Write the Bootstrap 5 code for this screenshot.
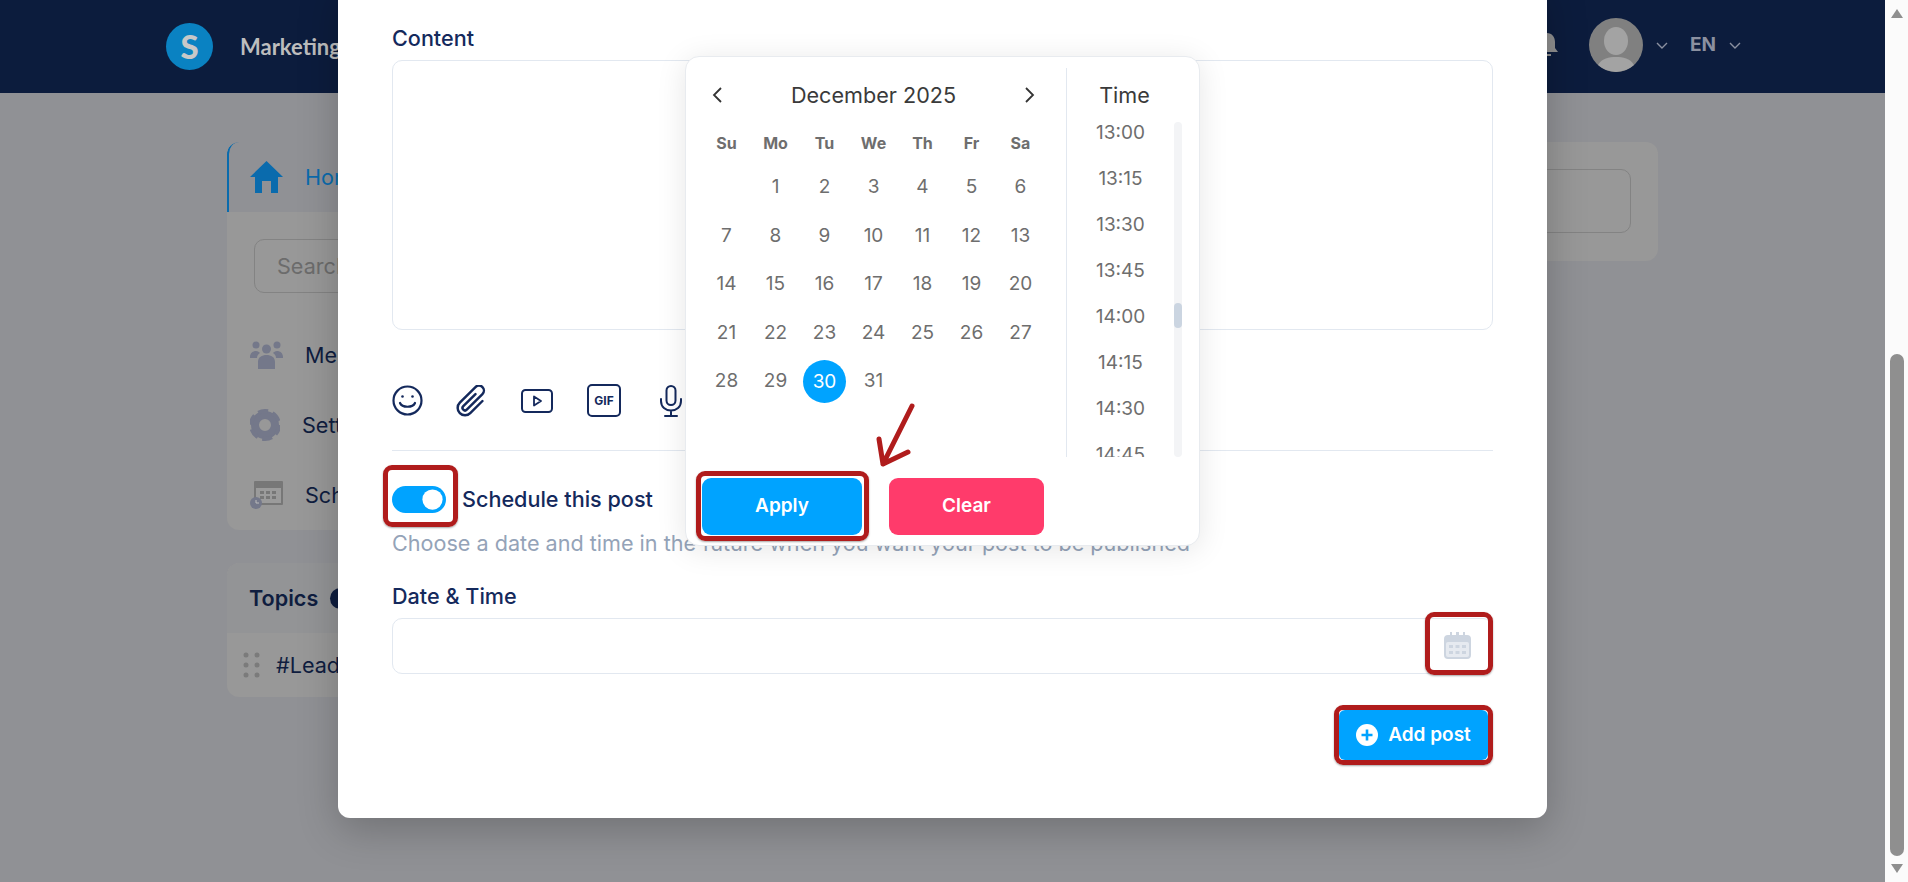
<!doctype html>
<html lang="en">

<head>
    <meta charset="utf-8">
    <meta name="viewport" content="width=device-width, initial-scale=1">
    <link href="https://cdn.jsdelivr.net/npm/bootstrap@5.3.3/dist/css/bootstrap.min.css" rel="stylesheet">
    <title>Schedule post</title>
    <style>
        html, body { height: 100%; overflow: hidden; }
        body { font-family: Inter, "Liberation Sans", sans-serif; color: #14295c; background: #fbfbfb; }

        /* page behind the dialog, colours are already dimmed */
        .page-area { width: 1885px; height: 882px; background: #909195; overflow: hidden; }
        .top-bar { height: 93px; background: #0c1c3d; padding: 0 144px 0 166px; }
        .brand-dot { width: 47px; height: 47px; border-radius: 50%; background: #0a82c2; color: #c8c8c8; font: 900 33px/47px Lato, sans-serif; text-align: center; }
        .brand-name { font: 700 22px Lato, sans-serif; color: #bdbdbd; margin-left: 27px; }
        .top-right { gap: 13px; margin-bottom: 3px; }
        .avatar-dot { width: 54px; height: 54px; margin-left: 15px; }
        .lang-name { font-size: 19px; font-weight: 700; color: #8b90a0; margin-left: 9px; }
        .page-main { padding: 49px 227px 0; }
        .side-col { width: 330px; }
        .dim-card { background: #989898; border: 0; border-radius: 12px; }
        .side-row { height: 70px; padding-left: 23px; font-size: 21.6px; color: #0f1d3f; gap: 22px; }
        .side-row svg { flex: none; }
        .side-active { background: #909195; border-left: 2px solid #0a6bad; color: #0a6bad; border-radius: 12px 0 0 0; padding-left: 21px; }
        .side-search { margin: 27px 0 27px 27px; width: 260px; height: 54px; padding-left: 22px; background: transparent; border-color: #838383; border-radius: 10px; font-size: 21.6px; }
        .side-search::placeholder { color: #6c6c6c; }
        .topics-card { margin-top: 33px; height: 134px; }
        .topics-head { height: 70px; padding-left: 22px; gap: 12px; background: #939496; font-size: 21.6px; font-weight: 600; color: #0f1d3f; border-radius: 12px 12px 0 0; }
        .topics-add { width: 21px; height: 21px; border-radius: 50%; background: #0f1d3f; }
        .topics-row { height: 64px; padding-left: 16px; gap: 16px; font-size: 21.6px; color: #0f1d3f; }
        .wide-card { width: 500px; height: 119px; padding: 27px 27px; }
        .wide-input { height: 64px; border: 1px solid #838383; border-radius: 10px; }

        /* dialog */
        .post-dialog { position: absolute; left: 338px; top: -20px; width: 1209px; height: 838px; padding: 46px 54px 0; border: 0; border-radius: 12px; background: #fff; box-shadow: 0 12px 40px rgba(0, 0, 0, .22); }
        .field-label { font-size: 21.6px; font-weight: 500; line-height: 24px; margin-bottom: 10px; color: #14295c; }
        .field-box { border: 1px solid #e2e8f0; border-radius: 10px; box-shadow: none; }
        .content-box { height: 270px; resize: none; }
        .tool-row { margin-top: 54px; height: 33px; gap: 33px; color: #14295c; }
        .gif-box { width: 34px; height: 33px; margin-left: 1px; border: 2px solid #14295c; border-radius: 5px; font-size: 12px; font-weight: 700; }
        .mic-icon { margin-left: 6px; }
        .dialog-line { margin: 33px 0 35px; border-top: 1px solid #e2e8f0; opacity: 1; }
        .switch-wrap { width: 54px; height: 27px; }
        .switch-input.form-check-input { width: 54px; height: 27px; margin: 0; float: none; border: 0; background-color: #00a3ff; }
        .switch-row { min-height: 27px; }
        .switch-text { font-size: 21.6px; line-height: 27px; font-weight: 500; margin-left: 16px; }
        .help-line { margin-top: 18px; font-size: 21.6px; line-height: 24px; color: #94a3b8; }
        .date-label { margin-top: 29px; }
        .date-box { height: 56px; }
        .cal-icon { position: absolute; right: 22px; top: 14px; }
        .add-btn { margin: 36px 5px 0 auto; width: 149px; height: 50px; border: 0; border-radius: 6px; background: #00a3ff; color: #fff; font-size: 19px; font-weight: 600; gap: 10px; }
        .add-btn:hover { background: #00a3ff; color: #fff; }

        /* red marks of the screenshot's author */
        .note-frame { position: absolute; border: 5px solid #b01c1c; border-radius: 9px; pointer-events: none; box-shadow: 0 1px 2px rgba(0, 0, 0, .35); }
        .frame-switch { left: -9px; right: -12px; top: -21px; bottom: -14px; }
        .frame-apply { left: -6px; right: -7px; top: -7px; bottom: -6px; }
        .frame-cal { right: 0; width: 68px; top: -6px; bottom: -1px; }
        .frame-add { inset: -5px; }
        .note-arrow { position: absolute; left: 190px; top: 346px; }

        /* date picker */
        .date-pop { position: absolute; left: 347px; top: 76px; width: 515px; height: 490px; padding-top: 11px; background: #fff; border: 1px solid #e8ebef; border-radius: 14px; box-shadow: 0 4px 30px rgba(0, 0, 0, .1); }
        .pop-top { height: 389px; }
        .month-col { width: 381px; padding-left: 16px; border-right: 1px solid #e2e8f0; }
        .month-head { height: 54px; width: 343px; padding: 0 10px; font-size: 21.6px; color: #3a3a3a; }
        .day-grid { display: grid; grid-template-columns: repeat(7, 49px); grid-auto-rows: 48.5px; text-align: center; font-size: 19px; color: #6e6e6e; }
        .day-grid > div { display: flex; align-items: center; justify-content: center; }
        .week-grid { grid-auto-rows: 41px; font-size: 16px; font-weight: 700; }
        .day-on { width: 43px; height: 43px; line-height: 43px; border-radius: 50%; background: #00a3ff; color: #fff; }
        .time-col { width: 115px; }
        .time-head { height: 54px; font-size: 21.6px; color: #3a3a3a; }
        .time-body { height: 335px; }
        .time-list { width: 107px; overflow: hidden; font-size: 19px; color: #6e6e6e; text-align: center; }
        .time-item { height: 46px; line-height: 46px; }
        .time-item:first-child { height: 34px; line-height: 22px; }
        .time-track { width: 8px; background: #f3f4f6; border-radius: 4px; }
        .time-thumb { width: 8px; height: 25px; margin-top: 181px; background: #cbd5e1; border-radius: 4px; }
        .pop-foot { padding: 21px 0 0 16px; gap: 27px; }
        .apply-btn, .clear-btn { height: 57px; border: 0; border-radius: 9px; color: #fff; font-size: 19px; font-weight: 600; }
        .apply-btn, .apply-btn:hover { width: 160px; background: #00a3ff; color: #fff; }
        .clear-btn, .clear-btn:hover { width: 155px; background: #ff3b6b; color: #fff; }

        /* browser scrollbar */
        .scroll-strip { width: 23px; height: 882px; padding: 9px 4px 9px 5px; }
        .arrow-up { border: 6px solid transparent; border-top: 0; border-bottom: 9px solid #8f8f8f; width: 0; margin: 0 auto; }
        .arrow-down { border: 6px solid transparent; border-bottom: 0; border-top: 9px solid #8f8f8f; width: 0; margin: 8px auto 0; }
        .scroll-thumb { height: 502px; margin-top: auto; background: #8f8f8f; border-radius: 7px; }
    </style>
</head>

<body class="d-flex">
    <div class="page-area position-relative">
        <header class="top-bar d-flex align-items-center">
            <div class="brand-dot">S</div>
            <span class="brand-name">Marketing</span>
            <div class="top-right d-flex align-items-center ms-auto">
                <svg width="28" height="24" viewBox="0 0 28 24" fill="#8f8f8f"><path d="M14 0c-5 0-8 4-8 9v6l-3 4h22l-3-4V9c0-5-3-9-8-9zM10 21h8v2h-8z"/></svg>
                <svg class="avatar-dot" viewBox="0 0 54 54"><circle cx="27" cy="27" r="27" fill="#808080"/><ellipse cx="27" cy="23" rx="12" ry="14" fill="#a3a3a3"/><path d="M9 47c4-7 11-8 18-8s14 1 18 8a27 27 0 0 1-36 0z" fill="#a3a3a3"/></svg>
                <svg width="12" height="7" viewBox="0 0 12 7" fill="none" stroke="#8b90a0" stroke-width="1.4"><path d="M1 1l5 5 5-5"/></svg>
                <span class="lang-name">EN</span>
                <svg width="12" height="7" viewBox="0 0 12 7" fill="none" stroke="#8b90a0" stroke-width="1.4"><path d="M1 1l5 5 5-5"/></svg>
            </div>
        </header>

        <main class="page-main d-flex align-items-start">
            <div class="side-col">
                <div class="card dim-card overflow-hidden">
                    <div class="side-row side-active d-flex align-items-center">
                        <svg width="33" height="32" viewBox="0 0 33 32" fill="#0a6bad"><path d="M16.500 0L33 16h-5v16h-7V20h-9v12H5V16H0z"/></svg>
                        <span>Home</span>
                    </div>
                    <input class="form-control side-search" type="text" placeholder="Search">
                    <div class="side-row d-flex align-items-center">
                        <svg width="33" height="28" viewBox="0 0 33 28" fill="#74788a"><circle cx="6" cy="4" r="3.500"/><circle cx="27" cy="4" r="3.500"/><circle cx="16.500" cy="8" r="4.500"/><path d="M0 16c0-4 3-6 6-6 2 0 3 1 4 2-2 1-3 3-3 5H0zM33 16c0-4-3-6-6-6-2 0-3 1-4 2 2 1 3 3 3 5h7zM8 28v-7c0-5 4-7 8.500-7S25 16 25 21v7z"/></svg>
                        <span>Members</span>
                    </div>
                    <div class="side-row d-flex align-items-center">
                        <svg width="30" height="36" viewBox="0 0 30 36"><circle cx="15" cy="18" r="10" fill="none" stroke="#74788a" stroke-width="8"/><circle cx="15" cy="18" r="14" fill="none" stroke="#74788a" stroke-width="4" stroke-dasharray="10 4.660"/></svg>
                        <span>Settings</span>
                    </div>
                    <div class="side-row d-flex align-items-center">
                        <svg width="33" height="28" viewBox="0 0 33 28"><rect x="4" y="0" width="29" height="24" rx="1" fill="#777"/><rect x="6" y="7" width="25" height="15" fill="#9b9b9b"/><g fill="#777"><rect x="10" y="10" width="4" height="3"/><rect x="16" y="10" width="4" height="3"/><rect x="22" y="10" width="4" height="3"/><rect x="10" y="15" width="4" height="3"/><rect x="16" y="15" width="4" height="3"/><rect x="22" y="15" width="4" height="3"/></g><circle cx="6" cy="22" r="6" fill="#74788a"/><path d="M6 19v3h3" fill="none" stroke="#bbb" stroke-width="1"/></svg>
                        <span>Schedule posts</span>
                    </div>
                </div>
                <div class="card dim-card topics-card overflow-hidden">
                    <div class="topics-head d-flex align-items-center">Topics<span class="topics-add"></span></div>
                    <div class="topics-row d-flex align-items-center">
                        <svg width="17" height="26" viewBox="0 0 17 26" fill="#7b7b7b"><circle cx="3" cy="3" r="2.500"/><circle cx="14" cy="3" r="2.500"/><circle cx="3" cy="13" r="2.500"/><circle cx="14" cy="13" r="2.500"/><circle cx="3" cy="23" r="2.500"/><circle cx="14" cy="23" r="2.500"/></svg>
                        <span>#LeadGeneration</span>
                    </div>
                </div>
            </div>
            <div class="card dim-card wide-card ms-auto">
                <div class="wide-input"></div>
            </div>
        </main>

        <div class="modal-content post-dialog">
            <div class="field-label">Content</div>
            <textarea class="form-control field-box content-box"></textarea>

            <div class="tool-row d-flex align-items-center">
                <svg width="31" height="31" viewBox="0 0 31 31" fill="none" stroke="currentColor" stroke-width="2.200" stroke-linecap="round"><circle cx="15.500" cy="15.500" r="14"/><circle cx="10.500" cy="11.500" r="1.300" fill="currentColor" stroke="none"/><circle cx="20.500" cy="11.500" r="1.300" fill="currentColor" stroke="none"/><path d="M8 18c2 5 13 5 15 0"/></svg>
                <svg width="32" height="32" viewBox="1.500 1.500 13 13" fill="currentColor"><path transform="rotate(45 8 8)" d="M4.500 3a2.500 2.500 0 0 1 5 0v9a1.500 1.500 0 0 1-3 0V5a.5.5 0 0 1 1 0v7a.5.5 0 0 0 1 0V3a1.500 1.500 0 1 0-3 0v9a2.500 2.500 0 0 0 5 0V5a.5.5 0 0 1 1 0v7a3.500 3.500 0 1 1-7 0V3z"/></svg>
                <svg width="32" height="24" viewBox="0 0 32 24" fill="none" stroke="currentColor" stroke-width="2"><rect x="1" y="1" width="30" height="22" rx="3.500"/><path d="M13 7.500l7 4.500-7 4.500z" stroke-width="1.800" stroke-linejoin="round"/></svg>
                <span class="gif-box d-flex align-items-center justify-content-center">GIF</span>
                <svg class="mic-icon" width="22" height="32" viewBox="0 0 22 32" fill="none" stroke="currentColor" stroke-width="2" stroke-linecap="round"><rect x="6.500" y="1" width="9" height="19" rx="4.500"/><path d="M1 14v2c0 6 4.500 9.500 10 9.500S21 22 21 16v-2M11 25.500V31M5 31h12"/></svg>
            </div>
            <hr class="dialog-line">

            <div class="switch-row d-flex align-items-center form-check form-switch p-0 m-0">
                <div class="switch-wrap position-relative">
                    <input class="form-check-input switch-input" type="checkbox" role="switch" checked>
                    <span class="note-frame frame-switch"></span>
                </div>
                <span class="switch-text">Schedule this post</span>
            </div>
            <div class="help-line">Choose a date and time in the future when you want your post to be published</div>

            <div class="field-label date-label">Date &amp; Time</div>
            <div class="position-relative">
                <input class="form-control field-box date-box" type="text">
                <svg class="cal-icon" width="27" height="27" viewBox="0 0 27 27"><path d="M6 0h2v3h4V0h3v3h4V0h2v3h2a4 4 0 0 1 4 4v16a4 4 0 0 1-4 4H4a4 4 0 0 1-4-4V7a4 4 0 0 1 4-4h2z" fill="#cdd5e0"/><rect x="2" y="10" width="23" height="15" rx="2" fill="#e6eaf0"/><g fill="#cdd5e0"><rect x="5" y="13" width="4" height="3"/><rect x="11.500" y="13" width="4" height="3"/><rect x="18" y="13" width="4" height="3"/><rect x="5" y="19" width="4" height="3"/><rect x="11.500" y="19" width="4" height="3"/><rect x="18" y="19" width="4" height="3"/></g></svg>
                <span class="note-frame frame-cal"></span>
            </div>

            <div class="d-flex">
                <button type="button" class="btn add-btn d-flex align-items-center justify-content-center position-relative">
                    <svg width="22" height="22" viewBox="0 0 22 22"><circle cx="11" cy="11" r="11" fill="#fff"/><path d="M11 5.500v11M5.500 11h11" stroke="#00a3ff" stroke-width="2.600"/></svg>
                    Add post
                    <span class="note-frame frame-add"></span>
                </button>
            </div>

            <div id="date-pop" class="date-pop">
                <div class="pop-top d-flex">
                    <div class="month-col">
                        <div class="month-head d-flex align-items-center justify-content-between">
                            <svg width="12" height="16" viewBox="0 0 12 16" fill="none" stroke="#333" stroke-width="1.800"><path d="M9 1L2 8l7 7"/></svg>
                            <span>December 2025</span>
                            <svg width="12" height="16" viewBox="0 0 12 16" fill="none" stroke="#333" stroke-width="1.800"><path d="M3 1l7 7-7 7"/></svg>
                        </div>
                        <div id="week-grid" class="day-grid week-grid"></div>
                        <div id="day-grid" class="day-grid"></div>
                    </div>
                    <div class="time-col">
                        <div class="time-head d-flex align-items-center justify-content-center">Time</div>
                        <div class="time-body d-flex">
                            <div id="time-list" class="time-list"></div>
                            <div class="time-track"><div class="time-thumb"></div></div>
                        </div>
                    </div>
                </div>
                <div class="pop-foot d-flex">
                    <button type="button" class="btn apply-btn position-relative">Apply<span class="note-frame frame-apply"></span></button>
                    <button type="button" class="btn clear-btn">Clear</button>
                </div>
                <svg class="note-arrow" width="40" height="65" viewBox="0 0 40 65" fill="none" stroke="#b01c1c" stroke-width="5" stroke-linecap="round" stroke-linejoin="round"><path d="M36 3L7 61M3 36l4 25 25-12"/></svg>
            </div>
        </div>
    </div>

    <div class="scroll-strip d-flex flex-column">
        <div class="arrow-up"></div>
        <div class="scroll-thumb"></div>
        <div class="arrow-down"></div>
    </div>

    <script>
        // calendar cells
        const weekGrid = document.getElementById('week-grid');
        ['Su', 'Mo', 'Tu', 'We', 'Th', 'Fr', 'Sa'].forEach(d => {
            const cell = document.createElement('div');
            cell.textContent = d;
            weekGrid.appendChild(cell);
        });

        const dayGrid = document.getElementById('day-grid');
        dayGrid.appendChild(document.createElement('div'));
        for (let d = 1; d <= 31; d++) {
            const cell = document.createElement('div');
            if (d === 30) {
                const on = document.createElement('span');
                on.className = 'day-on';
                on.textContent = d;
                cell.appendChild(on);
            } else {
                cell.textContent = d;
            }
            dayGrid.appendChild(cell);
        }

        const timeList = document.getElementById('time-list');
        ['13:00', '13:15', '13:30', '13:45', '14:00', '14:15', '14:30', '14:45'].forEach(t => {
            const item = document.createElement('div');
            item.className = 'time-item';
            item.textContent = t;
            timeList.appendChild(item);
        });
    </script>
</body>

</html>
